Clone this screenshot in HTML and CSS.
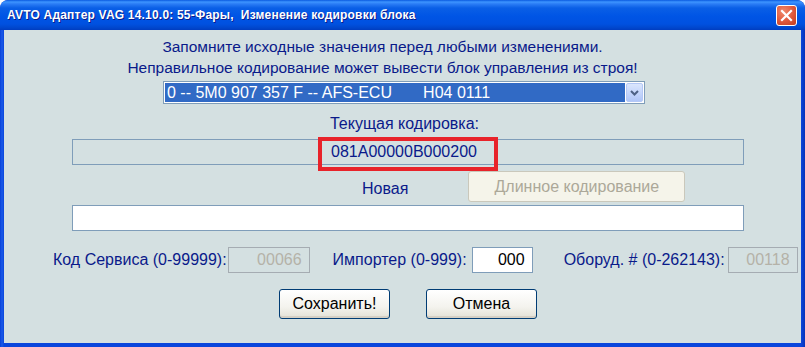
FILE: index.html
```html
<!DOCTYPE html>
<html lang="ru">
<head>
  <meta charset="UTF-8">
  <title>AVTO Адаптер VAG - Изменение кодировки блока</title>
  <link rel="stylesheet" href="styles.css">
</head>
<body>

  <div class="window">
    <div class="titlebar">
      <span class="title-text">AVTO Адаптер VAG 14.10.0: 55-Фары,&nbsp; Изменение кодировки блока</span>
      <div class="close-btn">
        <svg width="13" height="13" viewBox="0 0 13 13"><path d="M2 2 L11 11 M11 2 L2 11" stroke="#fff" stroke-width="2.2" stroke-linecap="square"/></svg>
      </div>
    </div>

    <div class="client">
      <div class="notice">
        <div>Запомните исходные значения перед любыми изменениями.</div>
        <div>Неправильное кодирование может вывести блок управления из строя!</div>
      </div>

      <div class="combo">
        <div class="combo-value">0 -- 5M0 907 357 F -- AFS-ECU&nbsp;&nbsp;&nbsp;&nbsp;&nbsp;&nbsp;&nbsp;H04 0111</div>
        <div class="combo-arrow">
          <svg width="9" height="6" viewBox="0 0 9 6"><path d="M1 1 L4.5 4.5 L8 1" fill="none" stroke="#4d6185" stroke-width="2"/></svg>
        </div>
      </div>

      <div class="caption">Текущая кодировка:</div>
      <div class="code-box">
        <span class="code-value">081A00000B000200</span>
        <span class="highlight"></span>
      </div>

      <div class="new-row">
        <span class="new-label">Новая</span>
        <button class="btn-long" disabled>Длинное кодирование</button>
      </div>
      <div class="new-input"></div>

      <div class="fields">
        <span class="field-label lbl-service">Код Сервиса (0-99999):</span>
        <span class="field field-disabled w-service">00066</span>
        <span class="field-label lbl-importer">Импортер (0-999):</span>
        <span class="field w-importer">000</span>
        <span class="field-label lbl-equip">Оборуд. # (0-262143):</span>
        <span class="field field-disabled w-equip">00118</span>
      </div>

      <div class="actions">
        <button class="btn">Сохранить!</button>
        <button class="btn">Отмена</button>
      </div>
    </div>
  </div>

</body>
</html>
```

FILE: styles.css
```css
body { margin: 0; background: #fff; font-family: "Liberation Sans", Arial, sans-serif; }
.window { width: 805px; height: 347px; display: flex; flex-direction: column; background: linear-gradient(to right, #0841d9, #1a5ae8 2px, #0a46dc 4px, #0a46dc calc(100% - 4px), #0733b8); border-radius: 8px 8px 0 0; box-sizing: border-box; overflow: hidden; }

/* title bar */
.titlebar { height: 30px; flex: none; display: flex; align-items: center; justify-content: space-between; padding: 0 8px 0 7px; background: linear-gradient(to bottom, #0a5ae0 0px, #3d95ff 2px, #2a7cf5 4px, #0a5fe6 8px, #0055e5 16px, #0051e0 24px, #0046cc 28px, #003dc0 30px); border-radius: 8px 8px 0 0; }
.title-text { color: #fff; font-family: "Liberation Sans", Tahoma, sans-serif; font-weight: bold; font-size: 12px; text-shadow: 1px 1px 0 #0a1b8a; letter-spacing: 0.2px; }
.close-btn { width: 21px; height: 21px; box-sizing: border-box; border: 1px solid #fff; border-radius: 3px; background: radial-gradient(circle at 35% 30%, #f08a6c, #e0573a 55%, #c23d1f); display: flex; align-items: center; justify-content: center; margin-top: 1px; }

/* client area */
.client { flex: 1; margin: 0 4px 4px 4px; background: #d4e0e1; padding-top: 6px; color: #0a1a8a; display: flex; flex-direction: column; }
.notice { font-size: 15.5px; line-height: 21px; text-align: center; padding-right: 40px; }

.combo { margin: 3px 0 0 159px; width: 482px; height: 23px; box-sizing: border-box; border: 1px solid #7f9db9; background: #fff; display: flex; padding: 1px; }
.combo-value { flex: 1; background: #316ac5; color: #fff; font-size: 16px; line-height: 19px; padding-left: 2px; white-space: pre; }
.combo-arrow { width: 17px; margin-left: 1px; box-sizing: border-box; border: 1px solid #b4c8f6; border-radius: 2px; background: linear-gradient(to bottom, #dbe6fd, #c1d3fb 60%, #b0c6f7); display: flex; align-items: center; justify-content: center; }

.caption { margin-top: 10px; font-size: 16px; line-height: 20px; text-align: center; padding-left: 4px; }
.code-box { margin: 5px 0 0 68px; width: 672px; height: 26px; box-sizing: border-box; border: 1px solid #7f9db9; display: flex; align-items: center; justify-content: center; position: relative; font-size: 16px; }
.code-value { margin-left: -8px; }
.highlight { position: absolute; left: 245px; top: -3px; width: 180px; height: 34px; box-sizing: border-box; border: 4px solid #e8232a; }

.new-row { margin-top: 6px; height: 31px; display: flex; align-items: center; }
.new-label { margin-left: 358px; font-size: 16px; padding-top: 4px; }
.btn-long { margin-left: 60px; width: 217px; height: 31px; border: 1px solid #cac8bb; border-radius: 3px; background: #f5f4ea; color: #aca899; font-family: "Liberation Sans", Arial, sans-serif; font-size: 16px; }
.new-input { margin: 3px 0 0 68px; width: 672px; height: 26px; box-sizing: border-box; border: 1px solid #7f9db9; background: #fff; }

.fields { margin-top: 16px; height: 26px; display: flex; align-items: center; font-size: 16px; }
.field { height: 26px; box-sizing: border-box; border: 1px solid #7f9db9; background: #fff; color: #000; text-align: right; padding-right: 7px; line-height: 23px; }
.field-disabled { border-color: #a5acb2; background: transparent; color: #b4b2a8; }
.lbl-service { margin-left: 49px; }
.w-service { margin-left: 1px; width: 82px; }
.lbl-importer { margin-left: 23px; }
.w-importer { margin-left: 5px; width: 61px; }
.lbl-equip { margin-left: 31px; }
.w-equip { margin-left: 3px; width: 70px; }

.actions { margin-top: 16px; display: flex; gap: 36px; padding-left: 275px; }
.btn { width: 111px; height: 30px; border: 1px solid #003c74; border-radius: 3px; background: linear-gradient(to bottom, #ffffff, #f4f3ee 60%, #e3e1d6); color: #000; font-family: "Liberation Sans", Arial, sans-serif; font-size: 16px; box-shadow: inset 0 -2px 0 #d6d0c5; }
```
